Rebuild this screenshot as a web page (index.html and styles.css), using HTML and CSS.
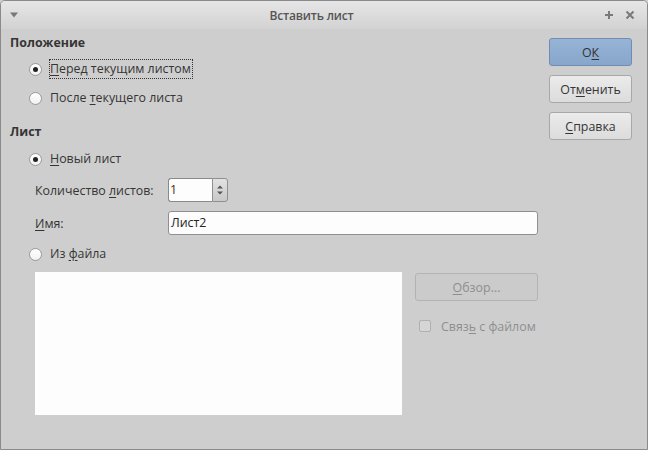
FILE: index.html
```html
<!DOCTYPE html>
<html lang="ru">
<head>
<meta charset="utf-8">
<link rel="stylesheet" href="styles.css">
</head>
<body>
<div class="window">
  <div class="titlebar">
    <span class="tb-menu"><svg width="10" height="8" viewBox="0 0 10 8"><path d="M1 1.5 L9 1.5 L5 6.5 Z" fill="#777"/></svg></span>
    <span class="tb-title">Вставить лист</span>
    <span class="tb-btns">
      <svg width="10" height="10" viewBox="0 0 10 10"><path d="M5 1 V9 M1 5 H9" stroke="#7a7a7a" stroke-width="2"/></svg>
      <svg width="10" height="10" viewBox="0 0 10 10"><path d="M1.5 1.5 L8.5 8.5 M8.5 1.5 L1.5 8.5" stroke="#7a7a7a" stroke-width="2"/></svg>
    </span>
  </div>
  <div class="content">
    <div class="main">
      <div class="heading h1">Положение</div>
      <div class="radio-row r1"><span class="radio checked"></span><span class="label focus"><u>П</u>еред текущим листом</span></div>
      <div class="radio-row r2"><span class="radio"></span><span class="label">После <u>т</u>екущего листа</span></div>
      <div class="heading h2">Лист</div>
      <div class="radio-row r3"><span class="radio checked"></span><span class="label"><u>Н</u>овый лист</span></div>
      <div class="form-row f1">
        <span class="form-label">Количество <u>л</u>истов:</span>
        <div class="spin"><span class="spin-input">1</span><span class="spin-btn"><svg width="8" height="14" viewBox="0 0 8 14"><path d="M1 5.5 L7 5.5 L4 2.5 Z M1 8.5 L7 8.5 L4 11.5 Z" fill="#555"/></svg></span></div>
      </div>
      <div class="form-row f2">
        <span class="form-label"><u>И</u>мя:</span>
        <span class="text-input">Лист2</span>
      </div>
      <div class="radio-row r4"><span class="radio"></span><span class="label">Из <u>ф</u>айла</span></div>
      <div class="file-area">
        <div class="listbox"></div>
        <div class="file-side">
          <div class="btn disabled"><span><u>О</u>бзор...</span></div>
          <div class="check-row"><span class="checkbox"></span><span class="check-label">Связ<u>ь</u> с файлом</span></div>
        </div>
      </div>
    </div>
    <div class="side">
      <div class="btn primary">О<u>К</u></div>
      <div class="btn">От<u>м</u>енить</div>
      <div class="btn"><u>С</u>правка</div>
    </div>
  </div>
</div>
</body>
</html>
```
FILE: styles.css
```css
* { box-sizing: border-box; }
html, body { margin: 0; padding: 0; background: #cecece; }
body { font-family: "Open Sans", "Noto Sans", sans-serif; font-size: 12.4px; color: #353535; }
u { text-decoration: underline; text-underline-offset: 2px; }
.window {
  width: 648px; height: 450px;
  border: 1px solid #8a8a8a;
  border-radius: 5px 5px 0 0;
  background: #cecece;
  overflow: hidden;
}
.titlebar {
  height: 28px;
  background: linear-gradient(#e6e6e6, #d2d2d2);
  display: flex; align-items: center;
  padding: 0 9px 0 8px;
}
.tb-menu { display: flex; width: 10px; }
.tb-title {
  flex: 1; text-align: center;
  font-family: "Open Sans", sans-serif; font-weight: 600;
  font-size: 12px; color: #555; letter-spacing: -0.2px;
}
.tb-btns { display: flex; gap: 11px; padding-right: 3px; }
.content { display: flex; }
.main { width: 537px; padding-left: 9px; padding-top: 5px; }
.side { width: 83px; margin-left: 11px; padding-top: 9px; display: flex; flex-direction: column; gap: 9px; }
.heading { font-weight: 700; height: 18px; line-height: 18px; }
.h2 { margin-top: 13px; }
.radio-row { height: 24px; display: flex; align-items: center; padding-left: 19px; }
.r1 { margin-top: 5px; }
.r2 { margin-top: 5px; }
.r3 { margin-top: 6px; }
.r4 { margin-top: 7px; }
.radio {
  width: 13px; height: 13px; border-radius: 50%;
  background: linear-gradient(#ffffff, #f2f2f2);
  border: 1px solid #9a9a9a;
  display: flex; align-items: center; justify-content: center;
  margin-right: 7px; flex: none;
}
.radio.checked::after { content: ""; width: 5px; height: 5px; border-radius: 50%; background: #222; }
.label { padding: 0 1px 0 0; line-height: 18px; border: 1px dotted transparent; white-space: nowrap; }
.label.focus { border-color: #333; }
.form-row { display: flex; align-items: center; height: 24px; padding-left: 25px; }
.f1 { margin-top: 7px; }
.f2 { margin-top: 9px; }
.form-label { width: 133px; flex: none; white-space: nowrap; }
.spin { display: flex; height: 24px; }
.spin-input {
  width: 44px; height: 24px; background: #fdfdfd;
  border: 1px solid #8a8a8a; border-right: none; border-radius: 3px 0 0 3px;
  line-height: 22px; padding-left: 1px; color: #4a2e14;
}
.spin-btn {
  width: 16px; height: 24px; border: 1px solid #8f8f8f; border-radius: 0 3px 3px 0;
  background: linear-gradient(#e2e2e2, #c8c8c8);
  display: flex; align-items: center; justify-content: center;
}
.text-input {
  width: 370px; height: 24px; background: #fdfdfd;
  border: 1px solid #8f8f8f; border-radius: 3px;
  line-height: 22px; padding-left: 2px; color: #222;
}
.file-area { display: flex; margin-top: 6px; padding-left: 25px; gap: 13px; }
.listbox { width: 367px; height: 143px; background: #fdfdfd; }
.file-side { width: 123px; padding-top: 1px; }
.btn {
  height: 28px; border: 1px solid #a8a8a8; border-radius: 3px;
  background: linear-gradient(#ebebeb, #dcdcdc);
  display: flex; align-items: center; justify-content: center;
  color: #353535; white-space: nowrap;
}
.btn.primary { background: linear-gradient(#97b4d6, #87a6cb); border-color: #6f8db2; color: #333; }
.btn.disabled { background: #cbcbcb; border-color: #b3b3b3; color: #8e8e8e; }
.check-row { display: flex; align-items: center; height: 20px; margin-top: 15px; padding-left: 4px; white-space: nowrap; }
.checkbox {
  width: 12px; height: 12px; border: 1px solid #b0b0b0; border-radius: 2px;
  background: #d6d6d6; margin-right: 10px; flex: none;
}
.check-label { color: #8e8e8e; }
```
